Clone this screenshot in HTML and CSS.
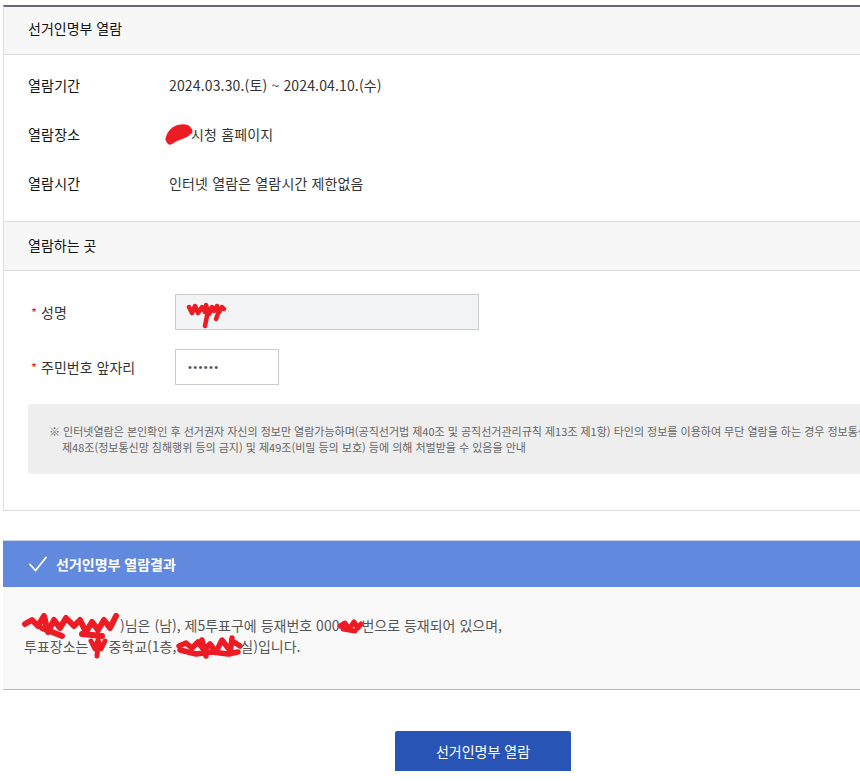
FILE: index.html
```html
<!DOCTYPE html>
<html lang="ko">
<head>
<meta charset="utf-8">
<title>선거인명부 열람</title>
<link rel="stylesheet" href="styles.css">
</head>
<body>
<div class="wrap">
  <section class="box">
    <h2 class="head">선거인명부 열람</h2>
    <div class="info">
      <div class="row"><span class="lbl">열람기간</span><span class="val">2024.03.30.(토) ~ 2024.04.10.(수)</span></div>
      <div class="row"><span class="lbl">열람장소</span><span class="val"><span class="redact r-place"><svg width="28" height="22" viewBox="0 0 28 22"><path d="M4 16 C6 8 12 4 20 5 C25 6 24 10 18 12 C12 14 8 16 5 18 M6 12 C12 8 18 8 24 8" fill="none" stroke="#ed1c24" stroke-width="7" stroke-linecap="round" stroke-linejoin="round"/></svg></span>시청 홈페이지</span></div>
      <div class="row"><span class="lbl">열람시간</span><span class="val">인터넷 열람은 열람시간 제한없음</span></div>
    </div>
    <h2 class="head head2">열람하는 곳</h2>
    <div class="form">
      <div class="frow">
        <span class="flbl"><span class="star">*</span>성명</span>
        <div class="field field-name"><svg class="scrib-name" width="42" height="28" viewBox="0 0 42 28"><path d="M3 6 L6 12 L9 5 L12 12 L16 6 L19 11 L20 4 L23 13 L26 6 L28 10 L31 5 L33 11 L36 6 L38 8 M22 10 L19 25 M33 10 L30 18" fill="none" stroke="#ed1c24" stroke-width="4.5" stroke-linecap="round" stroke-linejoin="round"/></svg></div>
      </div>
      <div class="frow">
        <span class="flbl"><span class="star">*</span>주민번호 앞자리</span>
        <div class="field field-id"><span class="dots">••••••</span></div>
      </div>
      <div class="notice">
        <div class="nline">※ 인터넷열람은 본인확인 후 선거권자 자신의 정보만 열람가능하며(공직선거법 제40조 및 공직선거관리규칙 제13조 제1항) 타인의 정보를 이용하여 무단 열람을 하는 경우 정보통신망 이용촉진 및 정보보호 등에 관한 법률</div>
        <div class="nline nline2">제48조(정보통신망 침해행위 등의 금지) 및 제49조(비밀 등의 보호) 등에 의해 처벌받을 수 있음을 안내</div>
      </div>
    </div>
  </section>

  <section class="result">
    <div class="rbar">
      <svg class="check" width="18" height="16" viewBox="0 0 18 16"><path d="M1 8.5 L6.5 14.5 L17 1.5" fill="none" stroke="#fff" stroke-width="1.8" stroke-linecap="round" stroke-linejoin="round"/></svg>
      <span>선거인명부 열람결과</span>
    </div>
    <div class="rbody">
      <p class="rline"><span class="redact r-name"><svg width="100" height="32" viewBox="0 0 100 32"><path d="M3 14 L10 10 L16 16 L22 6 L26 22 L32 10 L38 18 L44 8 L52 16 L58 10 L64 22 L70 12 L76 20 L82 10 L88 18 L94 6 M20 18 L40 26 M60 24 L80 26" fill="none" stroke="#ed1c24" stroke-width="6" stroke-linecap="round" stroke-linejoin="round"/></svg></span>)님은 (남), 제5투표구에 등재번호 000<span class="redact r-num"><svg width="26" height="18" viewBox="0 0 26 18"><path d="M3 9 L8 6 L12 12 L17 5 L21 11 L24 7 M6 12 L18 14" fill="none" stroke="#ed1c24" stroke-width="5" stroke-linecap="round" stroke-linejoin="round"/></svg></span>번으로 등재되어 있으며,</p>
      <p class="rline">투표장소는 <span class="redact r-sch"><svg width="20" height="24" viewBox="0 0 20 24"><path d="M3 6 L7 14 L10 5 L13 14 L17 6 M10 10 L9 21" fill="none" stroke="#ed1c24" stroke-width="5" stroke-linecap="round" stroke-linejoin="round"/></svg></span>중학교(1층,<span class="redact r-room"><svg width="68" height="26" viewBox="0 0 68 26"><path d="M3 12 L10 9 L16 14 L22 8 L28 16 L34 10 L40 18 L46 6 L52 14 L58 8 L64 12 M4 16 L20 20 L36 18 L52 20 L62 18 M26 6 L30 22 M56 4 L54 20" fill="none" stroke="#ed1c24" stroke-width="5.5" stroke-linecap="round" stroke-linejoin="round"/></svg></span>실)입니다.</p>
    </div>
  </section>

  <div class="actions">
    <button class="btn" type="button">선거인명부 열람</button>
  </div>
</div>
</body>
</html>
```

FILE: styles.css
```css
html, body {
  margin: 0;
  padding: 0;
  background: #fff;
  overflow: hidden;
}

body {
  font-family: "Noto Sans CJK KR", "Noto Sans", sans-serif;
  font-size: 14px;
  color: #333;
}

.wrap {
  width: 960px;
  margin-left: 3px;
  padding-top: 5px;
}

.box {
  border: 1px solid #ddd;
  border-top: 2px solid #676a72;
}

.head {
  margin: 0;
  height: 47px;
  line-height: 43px;
  padding-left: 24px;
  background: #f7f7f7;
  border-bottom: 1px solid #ddd;
  font-size: 14px;
  font-weight: 400;
  color: #111;
}

.head2 {
  height: 48px;
  line-height: 46px;
}

.info {
  padding: 5px 0 14px 24px;
  border-bottom: 1px solid #ddd;
}

.row {
  display: flex;
  align-items: center;
  height: 49px;
}

.lbl {
  width: 141px;
  flex: none;
  color: #111;
  font-weight: 400;
  letter-spacing: 0.2px;
}

.val {
  display: flex;
  align-items: center;
  color: #333;
  letter-spacing: 0.15px;
}

.redact {
  display: inline-flex;
  align-items: center;
}

.r-place {
  margin-left: -4px;
  margin-right: -2px;
}

.form {
  padding: 23px 0 36px 24px;
}

.frow {
  display: flex;
  align-items: center;
  margin-bottom: 19px;
}

.flbl {
  width: 147px;
  flex: none;
  color: #333;
  padding-left: 3px;
  box-sizing: border-box;
}

.star {
  color: #e0262a;
  margin-right: 4px;
  font-size: 13px;
}

.field {
  height: 36px;
  box-sizing: border-box;
  border: 1px solid #ccc;
  display: flex;
  align-items: center;
  padding-left: 10px;
}

.field-name {
  width: 304px;
  background: #f2f3f5;
}

.field-id {
  width: 104px;
  background: #fff;
}

.scrib-name {
  margin-top: 6px;
}

.dots {
  font-family: "Liberation Sans", sans-serif;
  font-size: 11px;
  letter-spacing: 1.4px;
  color: #555;
  padding-left: 2px;
}

.notice {
  margin-top: 5px;
  width: 912px;
  box-sizing: border-box;
  background: #eee;
  border-radius: 3px;
  padding: 19px 0 19px 21px;
  font-size: 11px;
  line-height: 16px;
  color: #666;
  white-space: nowrap;
  overflow: hidden;
}

.nline2 {
  padding-left: 13px;
}

.result {
  margin-top: 29px;
}

.rbar {
  height: 47px;
  box-sizing: border-box;
  border-top: 1px solid #c9cfdc;
  background: #6189dd;
  color: #fff;
  display: flex;
  align-items: center;
  padding-left: 26px;
  font-weight: 700;
  font-size: 14px;
}

.check {
  margin-right: 9px;
}

.rbody {
  background: #f9f9f9;
  border-bottom: 1px solid #bbb;
  padding: 28px 0 32px 21px;
}

.rline {
  margin: 0;
  height: 21px;
  line-height: 21px;
  color: #555;
  display: flex;
  align-items: center;
  white-space: nowrap;
}

.r-name {
  margin-left: -2px;
  margin-right: -2px;
}

.r-num {
  margin-left: -2px;
  margin-right: -2px;
}

.r-room {
  margin-right: -4px;
}

.actions {
  display: flex;
  justify-content: center;
  padding-top: 41px;
}

.btn {
  width: 176px;
  height: 40px;
  border: 0;
  border-radius: 2px 2px 0 0;
  background: #2855b5;
  color: #fff;
  font-family: "Noto Sans CJK KR", sans-serif;
  font-size: 14px;
  font-weight: 400;
  cursor: pointer;
}
```
